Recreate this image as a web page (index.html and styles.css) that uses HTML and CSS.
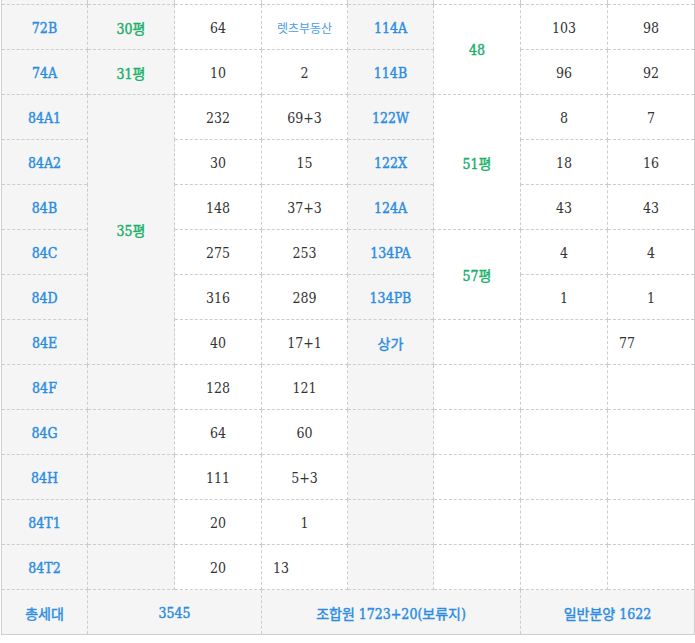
FILE: index.html
```html
<!DOCTYPE html>
<html lang="ko">
<head>
<meta charset="utf-8">
<title>세대 구성표</title>
<link rel="stylesheet" href="styles.css">
</head>
<body>
<div class="wrap">
<table class="units">
  <colgroup>
    <col class="c1"><col class="c2"><col class="c3"><col class="c4"><col class="c5"><col class="c6"><col class="c7"><col class="c8">
  </colgroup>
  <tbody>
    <tr class="spacer">
      <td class="g"></td><td class="g"></td><td></td><td></td><td class="g"></td><td></td><td></td><td></td>
    </tr>
    <tr>
      <td class="g type">72B</td><td class="g size">30평</td><td>64</td><td class="agent">렛츠부동산</td>
      <td class="g type">114A</td><td class="size" rowspan="2">48</td><td>103</td><td>98</td>
    </tr>
    <tr>
      <td class="g type">74A</td><td class="g size">31평</td><td>10</td><td>2</td>
      <td class="g type">114B</td><td>96</td><td>92</td>
    </tr>
    <tr>
      <td class="g type">84A1</td><td class="g size" rowspan="6">35평</td><td>232</td><td>69+3</td>
      <td class="g type">122W</td><td class="size" rowspan="3">51평</td><td>8</td><td>7</td>
    </tr>
    <tr>
      <td class="g type">84A2</td><td>30</td><td>15</td>
      <td class="g type">122X</td><td>18</td><td>16</td>
    </tr>
    <tr>
      <td class="g type">84B</td><td>148</td><td>37+3</td>
      <td class="g type">124A</td><td>43</td><td>43</td>
    </tr>
    <tr>
      <td class="g type">84C</td><td>275</td><td>253</td>
      <td class="g type">134PA</td><td class="size" rowspan="2">57평</td><td>4</td><td>4</td>
    </tr>
    <tr>
      <td class="g type">84D</td><td>316</td><td>289</td>
      <td class="g type">134PB</td><td>1</td><td>1</td>
    </tr>
    <tr>
      <td class="g type">84E</td><td>40</td><td>17+1</td>
      <td class="g type">상가</td><td></td><td></td><td class="left">77</td>
    </tr>
    <tr>
      <td class="g type">84F</td><td class="g"></td><td>128</td><td>121</td>
      <td class="g"></td><td></td><td></td><td></td>
    </tr>
    <tr>
      <td class="g type">84G</td><td class="g"></td><td>64</td><td>60</td>
      <td class="g"></td><td></td><td></td><td></td>
    </tr>
    <tr>
      <td class="g type">84H</td><td class="g"></td><td>111</td><td>5+3</td>
      <td class="g"></td><td></td><td></td><td></td>
    </tr>
    <tr>
      <td class="g type">84T1</td><td class="g"></td><td>20</td><td>1</td>
      <td class="g"></td><td></td><td></td><td></td>
    </tr>
    <tr>
      <td class="g type">84T2</td><td class="g"></td><td>20</td><td class="left">13</td>
      <td class="g"></td><td></td><td></td><td></td>
    </tr>
    <tr class="total">
      <td class="g type">총세대</td>
      <td class="g type" colspan="2">3545</td>
      <td class="g type" colspan="3">조합원 1723+20(보류지)</td>
      <td class="g type" colspan="2">일반분양 1622</td>
    </tr>
  </tbody>
</table>
</div>
</body>
</html>
```
FILE: styles.css
```css
html, body {
  margin: 0;
  padding: 0;
  background: #ffffff;
}

.wrap {
  padding-left: 1px;
}

.units {
  border-collapse: collapse;
  table-layout: fixed;
  width: 693px;
  border: 1px solid #cfcfcf;
  border-top: none;
  font-family: "DejaVu Serif", "Noto Sans CJK KR", serif;
  font-stretch: condensed;
  font-size: 14px;
  color: #333333;
}

.c1 { width: 86px; }
.c2 { width: 87px; }
.c3 { width: 87px; }
.c4 { width: 86px; }
.c5 { width: 86px; }
.c6 { width: 87px; }
.c7 { width: 87px; }
.c8 { width: 87px; }

.units td {
  border: 1px dashed #cccccc;
  height: 43px;
  padding: 1px 0 0;
  text-align: center;
  vertical-align: middle;
  white-space: nowrap;
}

.units tr.spacer td {
  height: 4px;
  padding: 0;
  border-top: none;
}

.units td.g {
  background: #f5f5f5;
}

.units td.type {
  color: #2a8ce2;
  -webkit-text-stroke: 0.4px currentColor;
}

.units td.size {
  color: #1aaf68;
  -webkit-text-stroke: 0.4px currentColor;
}

.units td.agent {
  color: #4a9de6;
  font-family: "Noto Sans CJK KR", sans-serif;
  font-stretch: normal;
  font-size: 12px;
}

.units td.left {
  text-align: left;
  padding-left: 11px;
}

.units tr.total td {
  border-bottom: 1px solid #cfcfcf;
}
```
